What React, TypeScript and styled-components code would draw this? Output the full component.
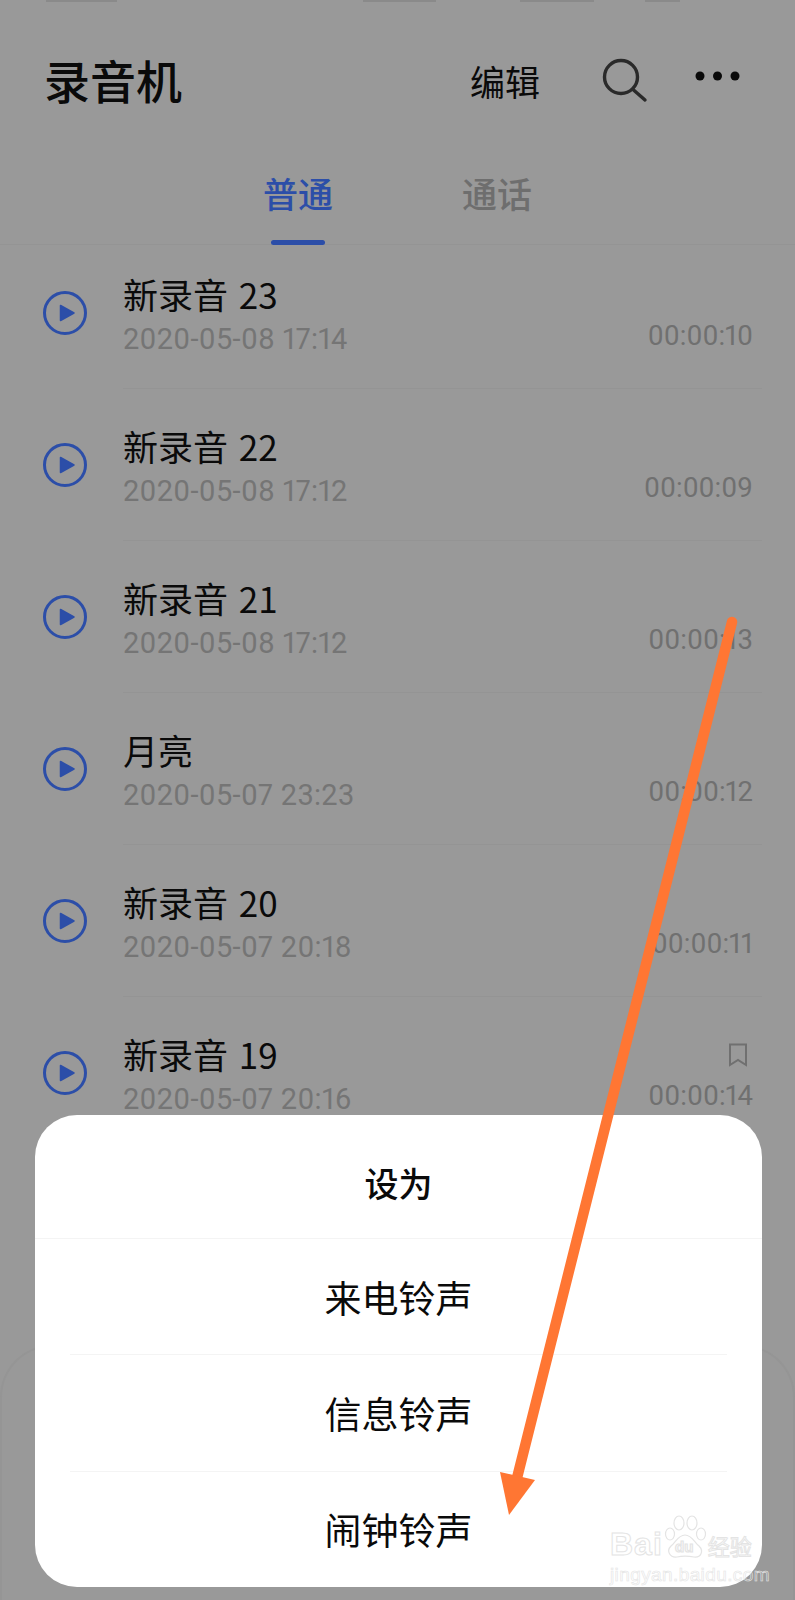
import * as React from "react";
import styled, {createGlobalStyle} from 'styled-components'

const GlobalStyle = createGlobalStyle`
  html, body {
    margin: 0;
    padding: 0;
    background: #999;
  }
  body {
    font-family: "Noto Sans CJK SC", "Noto Sans", sans-serif;
  }
`

const Screen = styled.div`
  position: relative;
  width: 795px;
  height: 1600px;
  overflow: hidden;
  background-color: #999;
`

const StatusStrip = styled.div`
  height: 3px;
  display: flex;
  overflow: hidden;
`

const StatusMark = styled.span<{ $gap: number, $width: number }>`
  margin-left: ${({$gap}) => $gap}px;
  width: ${({$width}) => $width}px;
  height: 2px;
  background-color: #777;
  opacity: .45;
`

const Header = styled.header`
  height: 160px;
  padding: 0 51px 0 44px;
  display: flex;
  align-items: center;
`

const Title = styled.h1`
  margin: 0 0 8px;
  flex: 1;
  font-size: 46px;
  line-height: 60px;
  font-weight: 500;
  color: #0a0a0a;
`

const EditButton = styled.span`
  margin: 0 60px 4px 0;
  font-size: 35px;
  line-height: 44px;
  color: #0a0a0a;
`

const SearchIcon = styled.svg`
  width: 48px;
  height: 54px;
  margin-right: 44px;
`

const MoreIcon = styled.svg`
  width: 52px;
  height: 54px;
`

const TabBar = styled.nav`
  height: 82px;
  box-sizing: border-box;
  border-bottom: 1px solid #949494;
  display: flex;
  justify-content: center;
  gap: 129px;
`

const Tab = styled.span<{ $active?: boolean }>`
  position: relative;
  height: 82px;
  font-size: 35px;
  line-height: 60px;
  font-weight: 500;
  color: ${({$active}) => $active ? '#2c4ea8' : '#6e6e6e'};

  ${({$active}) => $active ? `
  &::after {
    content: '';
    position: absolute;
    left: 8px;
    right: 8px;
    bottom: 0;
    height: 5px;
    border-radius: 3px;
    background-color: #2c4ea8;
  }
  ` : ''}
`

const Row = styled.div`
  height: 152px;
  padding-left: 42px;
  display: flex;
  align-items: flex-end;

  &:first-child {
    height: 144px;
  }
`

const PlayIcon = styled.svg`
  width: 46px;
  height: 46px;
  margin-bottom: 53px;
  flex-shrink: 0;
`

const RowBody = styled.div`
  flex: 1;
  height: 100%;
  box-sizing: border-box;
  margin: 0 33px 0 35px;
  padding: 0 9px 30px 0;
  border-bottom: 1px solid #949494;
  display: flex;
  align-items: flex-end;
  justify-content: space-between;
`

const RowName = styled.div`
  margin-bottom: 3px;
  font-size: 35px;
  line-height: 42px;
  word-spacing: 3px;
  color: #0a0a0a;
`

const RowDate = styled.div`
  margin-bottom: -2px;
  font-size: 29px;
  line-height: 42px;
  letter-spacing: .3px;
  color: #757575;
  font-family: Roboto, "Noto Sans", sans-serif;
  font-feature-settings: 'pnum';
`

const RowMeta = styled.div`
  display: flex;
  flex-direction: column;
  align-items: flex-end;
  margin-bottom: 1px;
`

const Duration = styled.div`
  font-size: 27.5px;
  line-height: 42px;
  color: #707070;
  font-family: Roboto, "Noto Sans", sans-serif;
  font-feature-settings: 'pnum';
`

const BookmarkIcon = styled.svg`
  width: 20px;
  height: 24px;
  margin: 0 5px 8px 0;
`

const BackPanel = styled.div`
  position: absolute;
  left: 0;
  right: 0;
  top: 1345px;
  bottom: -60px;
  border: 2px solid #959595;
  border-bottom: none;
  border-radius: 52px 52px 0 0;
`

const Sheet = styled.div`
  position: absolute;
  left: 35px;
  top: 1115px;
  width: 727px;
  height: 472px;
  border-radius: 42px;
  background-color: #fff;
  overflow: hidden;
  display: flex;
  flex-direction: column;
`

const SheetTitle = styled.div`
  height: 124px;
  flex-shrink: 0;
  box-sizing: border-box;
  padding-top: 12px;
  border-bottom: 1px solid #f4f4f4;
  display: flex;
  align-items: center;
  justify-content: center;
  font-size: 34px;
  font-weight: 500;
  color: #0a0a0a;
`

const SheetOption = styled.div<{ $divided?: boolean }>`
  flex: 1;
  margin: 0 35px;
  border-top: ${({$divided}) => $divided ? '1px solid #f4f4f4' : 'none'};
  display: flex;
  align-items: center;
  justify-content: center;
  font-size: 37px;
  color: #0a0a0a;
`

const Watermark = styled.div`
  position: absolute;
  left: 610px;
  top: 1515px;
  width: 142px;
  color: transparent;
  -webkit-text-stroke: 1px #e4e4e4;
  font-family: "Liberation Sans", sans-serif;
`

const WatermarkTop = styled.div`
  height: 44px;
  display: flex;
  align-items: flex-end;
`

const WatermarkWord = styled.span`
  font-size: 32px;
  line-height: 30px;
  font-weight: 700;
  letter-spacing: 1px;
`

const WatermarkCjk = styled.span`
  font-family: "Noto Sans CJK SC", sans-serif;
  font-size: 22px;
  line-height: 28px;
  margin-left: 1px;
`

const PawIcon = styled.svg`
  width: 44px;
  height: 44px;
`

const WatermarkUrl = styled.div`
  margin-top: 5px;
  font-size: 19px;
  line-height: 22px;
  letter-spacing: .4px;
  white-space: nowrap;
  -webkit-text-stroke: .6px #e4e4e4;
`

const ArrowLayer = styled.svg`
  position: absolute;
  left: 0;
  top: 0;
  width: 795px;
  height: 1600px;
  pointer-events: none;
`

type Recording = {
  name: string,
  date: string,
  duration: string,
  marked?: boolean,
}

const recordings: Recording[] = [
  {name: '新录音 23', date: '2020-05-08 17:14', duration: '00:00:10'},
  {name: '新录音 22', date: '2020-05-08 17:12', duration: '00:00:09'},
  {name: '新录音 21', date: '2020-05-08 17:12', duration: '00:00:13'},
  {name: '月亮', date: '2020-05-07 23:23', duration: '00:00:12'},
  {name: '新录音 20', date: '2020-05-07 20:18', duration: '00:00:11'},
  {name: '新录音 19', date: '2020-05-07 20:16', duration: '00:00:14', marked: true},
]

const App = () => (
  <Screen>
    <GlobalStyle/>
    <StatusStrip>
      <StatusMark $gap={46} $width={71}/>
      <StatusMark $gap={246} $width={73}/>
      <StatusMark $gap={84} $width={74}/>
      <StatusMark $gap={51} $width={35}/>
    </StatusStrip>
    <Header>
      <Title>录音机</Title>
      <EditButton>编辑</EditButton>
      <SearchIcon viewBox="0 0 48 54" fill="none" stroke="#2a2a2a" strokeWidth="3.4" strokeLinecap="round">
        <circle cx="21" cy="21" r="16.5"/>
        <path d="M33 33.5 L45 44"/>
      </SearchIcon>
      <MoreIcon viewBox="0 0 52 54" fill="#0a0a0a">
        <circle cx="8" cy="20" r="4.5"/>
        <circle cx="25.5" cy="20" r="4.5"/>
        <circle cx="43" cy="20" r="4.5"/>
      </MoreIcon>
    </Header>
    <TabBar>
      <Tab $active>普通</Tab>
      <Tab>通话</Tab>
    </TabBar>
    <div>
      {recordings.map(r => (
        <Row key={r.name}>
          <PlayIcon viewBox="0 0 46 46">
            <circle cx="23" cy="23" r="20.5" fill="none" stroke="#2c4ea8" strokeWidth="3"/>
            <path d="M18.5 15.5 L32 23 L18.5 30.5 Z" fill="#2c4ea8" stroke="#2c4ea8" strokeWidth="1.5" strokeLinejoin="round"/>
          </PlayIcon>
          <RowBody>
            <div>
              <RowName>{r.name}</RowName>
              <RowDate>{r.date}</RowDate>
            </div>
            <RowMeta>
              {r.marked && (
                <BookmarkIcon viewBox="0 0 20 24" fill="none" stroke="#707070" strokeWidth="2">
                  <path d="M2 1.5 H18 V22 L10 17 L2 22 Z"/>
                </BookmarkIcon>
              )}
              <Duration>{r.duration}</Duration>
            </RowMeta>
          </RowBody>
        </Row>
      ))}
    </div>
    <BackPanel/>
    <Sheet>
      <SheetTitle>设为</SheetTitle>
      <SheetOption>来电铃声</SheetOption>
      <SheetOption $divided>信息铃声</SheetOption>
      <SheetOption $divided>闹钟铃声</SheetOption>
    </Sheet>
    <Watermark>
      <WatermarkTop>
        <WatermarkWord>Bai</WatermarkWord>
        <PawIcon viewBox="0 0 44 44" fill="none" stroke="#e4e4e4" strokeWidth="1.2">
          <ellipse cx="7" cy="19" rx="4.5" ry="6"/>
          <ellipse cx="16" cy="8" rx="5" ry="7"/>
          <ellipse cx="29" cy="8" rx="5" ry="7"/>
          <ellipse cx="38" cy="19" rx="4.5" ry="6"/>
          <path d="M22 20 C15 20 13 27 8 31 C3 36 7 43 14 42 C18 41 26 41 31 42 C38 43 41 36 36 31 C31 27 29 20 22 20 Z"/>
          <text x="12" y="37" fontSize="15" fontFamily="Liberation Sans" fontWeight="700">du</text>
        </PawIcon>
        <WatermarkCjk>经验</WatermarkCjk>
      </WatermarkTop>
      <WatermarkUrl>jingyan.baidu.com</WatermarkUrl>
    </Watermark>
    <ArrowLayer viewBox="0 0 795 1600">
      <line x1="732" y1="622" x2="517" y2="1478" stroke="#ff7633" strokeWidth="10.5" strokeLinecap="round"/>
      <polygon points="500,1472 535,1480 509,1515" fill="#ff7633"/>
    </ArrowLayer>
  </Screen>
)

export default App
